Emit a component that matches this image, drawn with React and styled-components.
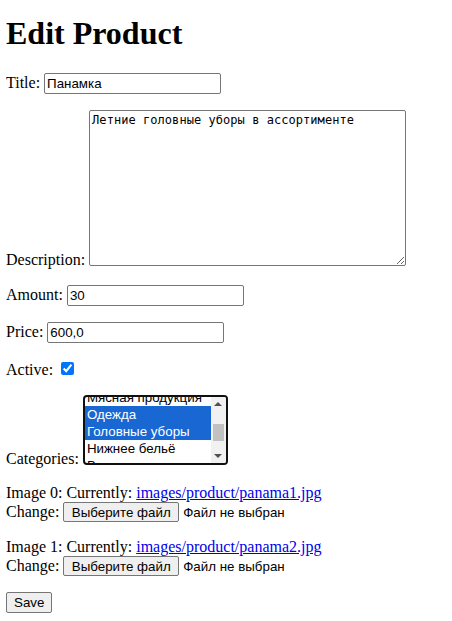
import React from 'react';
import styled, { createGlobalStyle } from 'styled-components';

const GlobalStyle = createGlobalStyle`
  body {
    margin: 0 8px 8px 6px;
    font-family: "Liberation Serif", "Times New Roman", serif;
    font-size: 16px;
    color: #000;
    background: #fff;
  }
`;

const categories = [
  { name: 'Мясная продукция', selected: false },
  { name: 'Одежда', selected: true },
  { name: 'Головные уборы', selected: true },
  { name: 'Нижнее бельё', selected: false },
  { name: 'Верхняя одежда', selected: false },
];

const images = ['images/product/panama1.jpg', 'images/product/panama2.jpg'];

const App = () => {
  return (
    <>
      <GlobalStyle />
      <Heading>Edit Product</Heading>
      <form onSubmit={(e) => e.preventDefault()}>
        <Field>
          Title: <TextInput type="text" defaultValue="Панамка" />
        </Field>
        <Field>
          Description: <TextArea defaultValue="Летние головные уборы в ассортименте" />
        </Field>
        <Field>
          Amount: <TextInput type="text" defaultValue="30" />
        </Field>
        <Field>
          Price: <TextInput type="text" defaultValue="600,0" />
        </Field>
        <Field>
          Active: <Checkbox type="checkbox" defaultChecked />
        </Field>
        <Field>
          Categories: <ListBox>
            <ListInner>
              <Options>
                <OptionList>
                  {categories.map((c) => (
                    <Option key={c.name} $selected={c.selected}>{c.name}</Option>
                  ))}
                </OptionList>
              </Options>
              <ScrollBar>
                <Arrow $dir="up" />
                <Track>
                  <Thumb />
                </Track>
                <Arrow $dir="down" />
              </ScrollBar>
            </ListInner>
          </ListBox>
        </Field>
        {images.map((src, i) => (
          <Field key={src}>
            Image {i}: Currently: <Link href="#">{src}</Link>
            <br />
            Change: <FileButton type="button">Выберите файл</FileButton><FileName>Файл не выбран</FileName>
          </Field>
        ))}
        <Field>
          <SaveButton type="submit">Save</SaveButton>
        </Field>
      </form>
    </>
  );
};

export default App;

const Heading = styled.h1`
  font-size: 32px;
  font-weight: bold;
  margin: 15px 0 21.44px;
`;

const Field = styled.p`
  margin: 16px 0;
`;

const TextInput = styled.input`
  box-sizing: border-box;
  width: 177px;
  height: 21px;
  padding: 1px 2px;
  border: 1px solid #767676;
  border-radius: 2px;
  font-family: "Liberation Sans", Arial, sans-serif;
  font-size: 13.33px;
  color: #000;
  margin: 0;
  outline: none;
`;

const TextArea = styled.textarea`
  box-sizing: border-box;
  width: 317px;
  height: 156px;
  padding: 2px;
  border: 1px solid #767676;
  border-radius: 2px;
  font-family: "DejaVu Sans Mono", "Liberation Mono", monospace;
  font-size: 12px;
  letter-spacing: 0.05px;
  color: #000;
  margin: 0 0 -1px;
  resize: both;
  outline: none;
`;

const Checkbox = styled.input`
  width: 13px;
  height: 13px;
  margin: 3px 3px 3px 4px;
  accent-color: #0075ff;
`;

const ListBox = styled.div`
  display: inline-block;
  box-sizing: border-box;
  width: 145px;
  height: 70px;
  border: 2px solid #101010;
  border-radius: 4px;
  overflow: hidden;
  vertical-align: baseline;
  margin-bottom: -1px;
  font-family: "Liberation Sans", Arial, sans-serif;
  font-size: 13.33px;
  background: #fff;
`;

const ListInner = styled.div`
  display: flex;
  height: 100%;
`;

const Options = styled.div`
  flex: 1;
  overflow: hidden;
`;

const OptionList = styled.div`
  margin-top: -8px;
`;

const Option = styled.div`
  height: 17px;
  line-height: 17px;
  padding: 0 2px;
  white-space: nowrap;
  background: ${(p) => (p.$selected ? '#1967d2' : 'transparent')};
  color: ${(p) => (p.$selected ? '#fff' : '#000')};
`;

const ScrollBar = styled.div`
  width: 15px;
  display: flex;
  flex-direction: column;
  background: #f1f1f1;
`;

const Arrow = styled.div`
  height: 14px;
  display: flex;
  align-items: center;
  justify-content: center;
  &::before {
    content: '';
    width: 0;
    height: 0;
    border-left: 4px solid transparent;
    border-right: 4px solid transparent;
    ${(p) => (p.$dir === 'up'
      ? 'border-bottom: 4px solid #505050;'
      : 'border-top: 4px solid #505050;')}
  }
`;

const Track = styled.div`
  flex: 1;
  padding: 0 2px;
`;

const Thumb = styled.div`
  margin-top: 13px;
  height: 17px;
  background: #c1c1c1;
`;

const Link = styled.a`
  color: #0000ee;
  text-decoration: underline;
`;

const FileButton = styled.button`
  box-sizing: border-box;
  height: 20px;
  padding: 1px 7.5px;
  margin: 0 4px 0 0;
  border: 1px solid #767676;
  border-radius: 2px;
  background: #efefef;
  font-family: "Liberation Sans", Arial, sans-serif;
  font-size: 13.33px;
  color: #000;
`;

const FileName = styled.span`
  font-family: "Liberation Sans", Arial, sans-serif;
  font-size: 13.33px;
`;

const SaveButton = styled(FileButton)`
  margin: 0;
  height: 21px;
  padding: 1px 7px;
`;
